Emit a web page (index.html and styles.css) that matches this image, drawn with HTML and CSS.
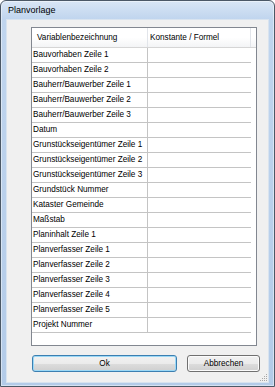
FILE: index.html
```html
<!DOCTYPE html>
<html lang="de">
<head>
    <meta charset="UTF-8">
    <title>Planvorlage</title>
    <link rel="stylesheet" href="styles.css">
</head>
<body>

    <div class="window">
        <div class="titlebar">Planvorlage</div>

        <div class="client">
            <!-- Variablen-Liste -->
            <div class="listview">
                <div class="lv-header">
                    <div class="col col-name">Variablenbezeichnung</div>
                    <div class="col col-value">Konstante / Formel</div>
                    <div class="col col-rest"></div>
                </div>
                <div class="lv-row"><div class="cell cell-name">Bauvorhaben Zeile 1</div><div class="cell cell-value"></div></div>
                <div class="lv-row"><div class="cell cell-name">Bauvorhaben Zeile 2</div><div class="cell cell-value"></div></div>
                <div class="lv-row"><div class="cell cell-name">Bauherr/Bauwerber Zeile 1</div><div class="cell cell-value"></div></div>
                <div class="lv-row"><div class="cell cell-name">Bauherr/Bauwerber Zeile 2</div><div class="cell cell-value"></div></div>
                <div class="lv-row"><div class="cell cell-name">Bauherr/Bauwerber Zeile 3</div><div class="cell cell-value"></div></div>
                <div class="lv-row"><div class="cell cell-name">Datum</div><div class="cell cell-value"></div></div>
                <div class="lv-row"><div class="cell cell-name">Grunstückseigentümer Zeile 1</div><div class="cell cell-value"></div></div>
                <div class="lv-row"><div class="cell cell-name">Grunstückseigentümer Zeile 2</div><div class="cell cell-value"></div></div>
                <div class="lv-row"><div class="cell cell-name">Grunstückseigentümer Zeile 3</div><div class="cell cell-value"></div></div>
                <div class="lv-row"><div class="cell cell-name">Grundstück Nummer</div><div class="cell cell-value"></div></div>
                <div class="lv-row"><div class="cell cell-name">Kataster Gemeinde</div><div class="cell cell-value"></div></div>
                <div class="lv-row"><div class="cell cell-name">Maßstab</div><div class="cell cell-value"></div></div>
                <div class="lv-row"><div class="cell cell-name">Planinhalt Zeile 1</div><div class="cell cell-value"></div></div>
                <div class="lv-row"><div class="cell cell-name">Planverfasser Zeile 1</div><div class="cell cell-value"></div></div>
                <div class="lv-row"><div class="cell cell-name">Planverfasser Zeile 2</div><div class="cell cell-value"></div></div>
                <div class="lv-row"><div class="cell cell-name">Planverfasser Zeile 3</div><div class="cell cell-value"></div></div>
                <div class="lv-row"><div class="cell cell-name">Planverfasser Zeile 4</div><div class="cell cell-value"></div></div>
                <div class="lv-row"><div class="cell cell-name">Planverfasser Zeile 5</div><div class="cell cell-value"></div></div>
                <div class="lv-row"><div class="cell cell-name">Projekt Nummer</div><div class="cell cell-value"></div></div>
            </div>

            <div class="buttons">
                <button class="btn btn-default">Ok</button>
                <button class="btn btn-cancel">Abbrechen</button>
            </div>

            <!-- Groessen-Griff unten rechts -->
            <svg class="grip" width="10" height="10" viewBox="0 0 10 10">
                <rect x="8" y="2" width="1" height="1" fill="#a8a8a8"/>
                <rect x="6" y="4" width="1" height="1" fill="#a8a8a8"/>
                <rect x="8" y="4" width="1" height="1" fill="#a8a8a8"/>
                <rect x="4" y="6" width="1" height="1" fill="#a8a8a8"/>
                <rect x="6" y="6" width="1" height="1" fill="#a8a8a8"/>
                <rect x="8" y="6" width="1" height="1" fill="#a8a8a8"/>
                <rect x="2" y="8" width="1" height="1" fill="#a8a8a8"/>
                <rect x="4" y="8" width="1" height="1" fill="#a8a8a8"/>
                <rect x="6" y="8" width="1" height="1" fill="#a8a8a8"/>
                <rect x="8" y="8" width="1" height="1" fill="#a8a8a8"/>
            </svg>
        </div>
    </div>

</body>
</html>
```

FILE: styles.css
```css
body {
    margin: 0;
    font-family: "Liberation Sans", Arial, sans-serif;
    font-size: 8.2px;
    color: #000;
    background: #fff;
}
.window {
    width: 275px;
    height: 387px;
    box-sizing: border-box;
    border: 1px solid #4b5866;
    border-radius: 6px 6px 0 0;
    background: linear-gradient(to bottom, #d9e6f5 0px, #c0d5ee 18px, #b3cbe8 100%);
    box-shadow: inset 0 0 0 1px rgba(255, 255, 255, 0.45);
    display: flex;
    flex-direction: column;
}
.titlebar {
    height: 18px;
    line-height: 18px;
    padding-left: 7px;
    font-size: 9px;
    color: #000;
}
.client {
    position: relative;
    margin: 0 5px 3px 5px;
    border: 1px solid #d8e3ef;
    background: #f0f0f0;
    padding: 7px 11px 10px 24px;
    height: 362px;
    display: flex;
    flex-direction: column;
}
.listview {
    height: 317px;
    border: 1px solid #828790;
    background: #fff;
}
.lv-header {
    display: flex;
    height: 19px;
    line-height: 19px;
    border-bottom: 1px solid #d5d5d5;
    background: linear-gradient(to bottom, #ffffff 0%, #ffffff 50%, #f3f4f6 100%);
}
.col {
    box-sizing: border-box;
    border-right: 1px solid #e2e5ea;
}
.col-name {
    width: 116px;
    padding-left: 5px;
}
.col-value {
    width: 103px;
    padding-left: 2px;
}
.col-rest {
    flex: 1;
    border-right: none;
}
.lv-row {
    display: flex;
    width: 219px;
    height: 14px;
    line-height: 14px;
    border-bottom: 1px solid #c4c4c4;
}
.cell {
    box-sizing: border-box;
    white-space: nowrap;
}
.cell-name {
    width: 116px;
    padding-left: 1px;
    border-right: 1px solid #c4c4c4;
}
.cell-value {
    flex: 1;
}
.buttons {
    display: flex;
    gap: 10px;
    width: 228px;
    margin: 9px 0 0 1px;
}
.btn {
    height: 17px;
    padding: 0;
    font-family: "Liberation Sans", Arial, sans-serif;
    font-size: 8.2px;
    color: #000;
    border: 1px solid #707070;
    border-radius: 3px;
    background: linear-gradient(to bottom, #f2f2f2 0%, #ebebeb 50%, #dddddd 51%, #cfcfcf 100%);
    box-shadow: inset 0 0 0 1px #fbfbfb;
}
.btn-default {
    width: 145px;
    border-color: #3c7fb1;
    box-shadow: inset 0 0 0 1px #9bd8f6;
}
.btn-cancel {
    width: 73px;
}
.grip {
    position: absolute;
    right: 0;
    bottom: 0;
}
```
